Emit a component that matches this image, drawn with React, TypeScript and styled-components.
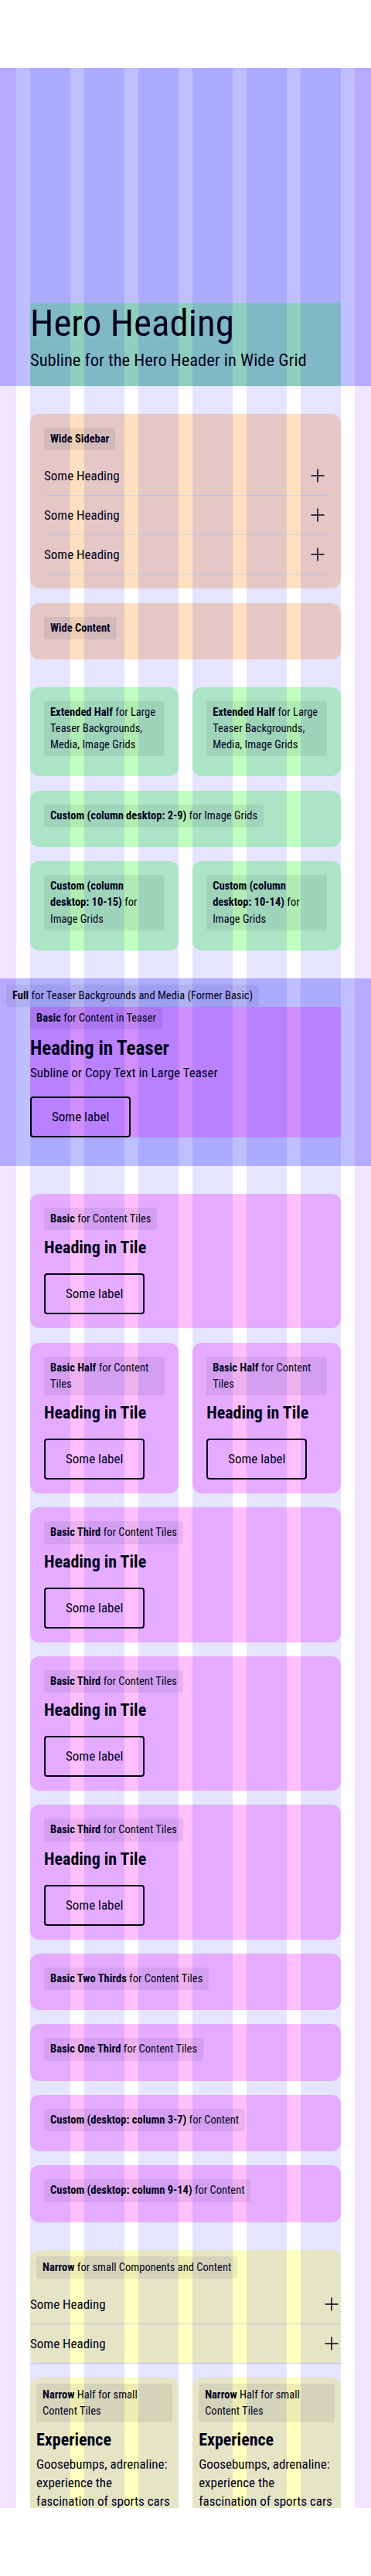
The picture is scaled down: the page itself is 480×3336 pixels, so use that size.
import React from "react";
import styled, { createGlobalStyle } from "styled-components";

const GlobalStyle = createGlobalStyle`
  html, body { margin: 0; padding: 0; background: #ffffff; }
  body {
    font-family: "Roboto Condensed", "Noto Sans", "Liberation Sans", sans-serif;
    font-stretch: condensed;
    color: #010205;
  }
  button { font-stretch: condensed; }
  * { box-sizing: border-box; }
`;

type Tone = "orange" | "green" | "pink" | "yellow";
const tones: Record<Tone, string> = {
  orange: "rgba(255, 128, 0, 0.25)",
  green: "rgba(0, 255, 0, 0.25)",
  pink: "rgba(255, 0, 255, 0.25)",
  yellow: "rgba(255, 255, 0, 0.25)",
};

type StripeKind = "margin" | "space" | "column" | "gutter";
const stripeColors: Record<StripeKind, string> = {
  margin: "rgba(128, 0, 255, 0.1)",
  space: "transparent",
  column: "rgba(0, 0, 255, 0.1)",
  gutter: "transparent",
};

const Page = styled.div`
  padding-top: 88px;
`;

const Canvas = styled.main`
  position: relative;
  height: 3160px;
  overflow: hidden;
  display: flex;
  flex-direction: column;
  gap: 36px;
  & > * { flex-shrink: 0; }
`;

const Overlay = styled.div`
  position: absolute;
  inset: 0;
  z-index: 10;
  pointer-events: none;
  display: grid;
  grid-template-columns: 21px 18px repeat(5, 52px 18px) 52px 18px 21px;
`;

const Stripe = styled.div<{ $kind: StripeKind }>`
  background: ${(p) => stripeColors[p.$kind]};
`;

const Hero = styled.header`
  height: 412px;
  display: flex;
  flex-direction: column;
  justify-content: flex-end;
  background: rgba(0, 0, 255, 0.25);
`;

const HeroBody = styled.div`
  margin: 0 39px;
  padding-bottom: 18px;
  background: rgba(0, 255, 0, 0.25);
`;

const HeroHeading = styled.h1`
  margin: 0;
  font-size: 49px;
  line-height: 54px;
  font-weight: 400;
`;

const HeroSubline = styled.p`
  margin: 4px 0 0;
  font-size: 22.5px;
  line-height: 32px;
`;

const Group = styled.section`
  display: grid;
  grid-template-columns: repeat(2, minmax(0, 1fr));
  gap: 18.3px;
  padding: 0 39px;
`;

const Tile = styled.div<{ $tone: Tone; $span?: 1 | 2; $pad?: string }>`
  grid-column: span ${(p) => p.$span ?? 2};
  background: ${(p) => tones[p.$tone]};
  border-radius: 12px;
  padding: ${(p) => p.$pad ?? "18px"};
  display: flex;
  flex-direction: column;
  align-items: flex-start;
`;

const Chip = styled.div<{ $flush?: boolean; $inset?: number }>`
  width: fit-content;
  max-width: 100%;
  padding: 4px 8px;
  border-radius: 4px;
  background: rgba(0, 0, 30, 0.07);
  font-size: 14.5px;
  line-height: 21.2px;
  margin: 0 0 ${(p) => (p.$flush ? 0 : 8)}px ${(p) => p.$inset ?? 0}px;

  strong {
    font-weight: 700;
  }
`;

const Accordion = styled.div`
  align-self: stretch;
  display: flex;
  flex-direction: column;
`;

const AccordionRow = styled.div`
  display: flex;
  align-items: center;
  justify-content: space-between;
  padding: 12px 0;
  border-bottom: 1px solid #d2d6ee;
  font-size: 17px;
  line-height: 26px;
`;

const PlusIcon = styled.svg`
  width: 24px;
  height: 24px;
  flex-shrink: 0;
`;

const TileHeading = styled.h3<{ $gap?: number }>`
  margin: 0 0 ${(p) => p.$gap ?? 18}px;
  font-size: 22px;
  line-height: 30px;
  font-weight: 700;
`;

const Button = styled.button`
  display: inline-flex;
  align-items: center;
  justify-content: center;
  padding: 12px 26px;
  border: 2px solid #010205;
  border-radius: 4px;
  background: transparent;
  color: #010205;
  font-family: inherit;
  font-size: 17px;
  line-height: 25px;
  cursor: pointer;
`;

const Copy = styled.p`
  margin: 0;
  font-size: 17px;
  line-height: 24px;
`;

const FullSection = styled.section`
  background: rgba(0, 0, 255, 0.25);
  padding: 8px 0 37px;
`;

const TeaserBlock = styled.div`
  margin: 0 39px;
  background: rgba(255, 0, 255, 0.25);
  display: flex;
  flex-direction: column;
  align-items: flex-start;
`;

const TeaserHeading = styled.h2`
  margin: 0;
  font-size: 25px;
  line-height: 33px;
  font-weight: 700;
`;

const TeaserSubline = styled.p`
  margin: 2px 0 17px;
  font-size: 17px;
  line-height: 27px;
`;

const stripes: StripeKind[] = [
  "margin",
  "space",
  "column",
  "gutter",
  "column",
  "gutter",
  "column",
  "gutter",
  "column",
  "gutter",
  "column",
  "gutter",
  "column",
  "space",
  "margin",
];

const Plus = () => (
  <PlusIcon viewBox="0 0 24 24" fill="none" stroke="#010205" strokeWidth={1.5} aria-hidden="true">
    <path d="M12 3.5v17M3.5 12h17" />
  </PlusIcon>
);

const AccordionList = ({ count }: { count: number }) => (
  <Accordion>
    {Array.from({ length: count }).map((_, i) => (
      <AccordionRow key={i}>
        <span>Some Heading</span>
        <Plus />
      </AccordionRow>
    ))}
  </Accordion>
);

const ContentTile = ({ bold, rest, span = 2 }: { bold: string; rest: string; span?: 1 | 2 }) => (
  <Tile $tone="pink" $span={span}>
    <Chip>
      <strong>{bold}</strong> {rest}
    </Chip>
    <TileHeading>Heading in Tile</TileHeading>
    <Button>Some label</Button>
  </Tile>
);

const LabelTile = ({ tone, bold, rest, span = 2 }: { tone: Tone; bold: string; rest?: string; span?: 1 | 2 }) => (
  <Tile $tone={tone} $span={span}>
    <Chip>
      <strong>{bold}</strong>
      {rest ? ` ${rest}` : ""}
    </Chip>
  </Tile>
);

const NarrowHalf = () => (
  <Tile $tone="yellow" $span={1} $pad="8px">
    <Chip>
      <strong>Narrow</strong> Half for small Content Tiles
    </Chip>
    <TileHeading $gap={4}>Experience</TileHeading>
    <Copy>Goosebumps, adrenaline: experience the fascination of sports cars and discover the world of Porsche.</Copy>
  </Tile>
);

export default function App() {
  return (
    <>
      <GlobalStyle />
      <Page>
        <Canvas>
          <Overlay aria-hidden="true">
            {stripes.map((kind, i) => (
              <Stripe key={i} $kind={kind} />
            ))}
          </Overlay>

          <Hero>
            <HeroBody>
              <HeroHeading>Hero Heading</HeroHeading>
              <HeroSubline>Subline for the Hero Header in Wide Grid</HeroSubline>
            </HeroBody>
          </Hero>

          <Group>
            <Tile $tone="orange">
              <Chip>
                <strong>Wide Sidebar</strong>
              </Chip>
              <AccordionList count={3} />
            </Tile>
            <LabelTile tone="orange" bold="Wide Content" />
          </Group>

          <Group>
            <LabelTile tone="green" span={1} bold="Extended Half" rest="for Large Teaser Backgrounds, Media, Image Grids" />
            <LabelTile tone="green" span={1} bold="Extended Half" rest="for Large Teaser Backgrounds, Media, Image Grids" />
            <LabelTile tone="green" bold="Custom (column desktop: 2-9)" rest="for Image Grids" />
            <LabelTile tone="green" span={1} bold="Custom (column desktop: 10-15)" rest="for Image Grids" />
            <LabelTile tone="green" span={1} bold="Custom (column desktop: 10-14)" rest="for Image Grids" />
          </Group>

          <FullSection>
            <Chip $flush $inset={8}>
              <strong>Full</strong> for Teaser Backgrounds and Media (Former Basic)
            </Chip>
            <TeaserBlock>
              <Chip>
                <strong>Basic</strong> for Content in Teaser
              </Chip>
              <TeaserHeading>Heading in Teaser</TeaserHeading>
              <TeaserSubline>Subline or Copy Text in Large Teaser</TeaserSubline>
              <Button>Some label</Button>
            </TeaserBlock>
          </FullSection>

          <Group>
            <ContentTile bold="Basic" rest="for Content Tiles" />
            <ContentTile span={1} bold="Basic Half" rest="for Content Tiles" />
            <ContentTile span={1} bold="Basic Half" rest="for Content Tiles" />
            <ContentTile bold="Basic Third" rest="for Content Tiles" />
            <ContentTile bold="Basic Third" rest="for Content Tiles" />
            <ContentTile bold="Basic Third" rest="for Content Tiles" />
            <LabelTile tone="pink" bold="Basic Two Thirds" rest="for Content Tiles" />
            <LabelTile tone="pink" bold="Basic One Third" rest="for Content Tiles" />
            <LabelTile tone="pink" bold="Custom (desktop: column 3-7)" rest="for Content" />
            <LabelTile tone="pink" bold="Custom (desktop: column 9-14)" rest="for Content" />
          </Group>

          <Group>
            <Tile $tone="yellow" $pad="8px 0 0">
              <Chip $inset={8}>
                <strong>Narrow</strong> for small Components and Content
              </Chip>
              <AccordionList count={2} />
            </Tile>
            <NarrowHalf />
            <NarrowHalf />
          </Group>
        </Canvas>
      </Page>
    </>
  );
}
